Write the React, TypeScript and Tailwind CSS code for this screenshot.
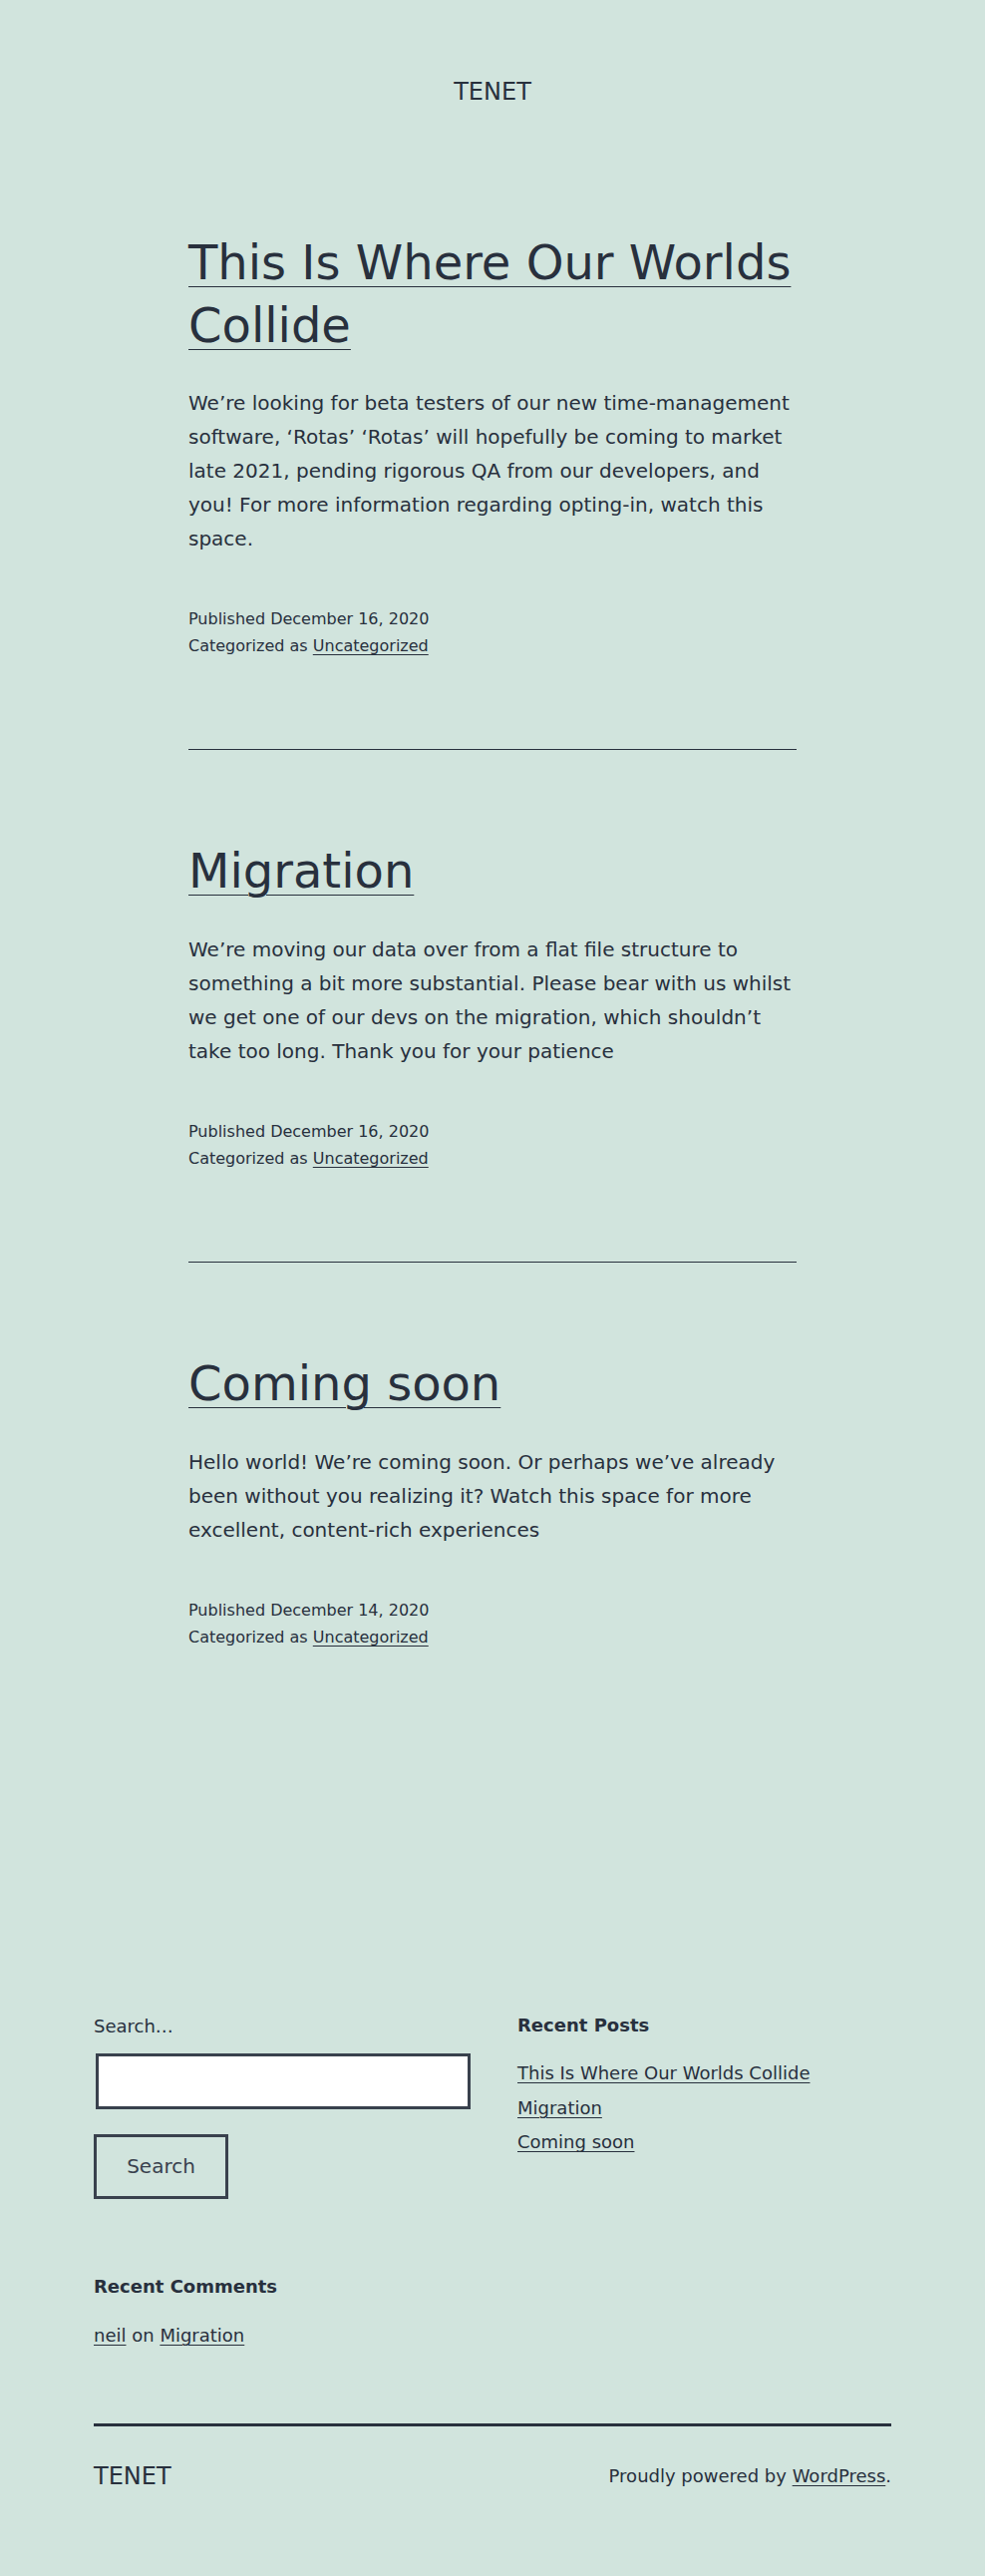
import React from "react";

type Post = {
  title: string;
  body: string;
  date: string;
};

const posts: Post[] = [
  {
    title: "This Is Where Our Worlds Collide",
    body: "We\u2019re looking for beta testers of our new time-management software, \u2018Rotas\u2019 \u2018Rotas\u2019 will hopefully be coming to market late 2021, pending rigorous QA from our developers, and you! For more information regarding opting-in, watch this space.",
    date: "December 16, 2020",
  },
  {
    title: "Migration",
    body: "We\u2019re moving our data over from a flat file structure to something a bit more substantial. Please bear with us whilst we get one of our devs on the migration, which shouldn\u2019t take too long. Thank you for your patience",
    date: "December 16, 2020",
  },
  {
    title: "Coming soon",
    body: "Hello world! We\u2019re coming soon. Or perhaps we\u2019ve already been without you realizing it? Watch this space for more excellent, content-rich experiences",
    date: "December 14, 2020",
  },
];

function Article({ post }: { post: Post }) {
  return (
    <article>
      <h2 className="text-[48px] leading-[62.4px] font-normal">
        <a href="#" className="underline decoration-1 underline-offset-[0.15em]">
          {post.title}
        </a>
      </h2>
      <p className="mt-[30px] text-[20px] leading-[34px]">{post.body}</p>
      <div className="mt-[50px] text-[16px] leading-[27.2px]">
        <div>Published {post.date}</div>
        <div>
          Categorized as{" "}
          <a href="#" className="underline decoration-1 underline-offset-[3px]">
            Uncategorized
          </a>
        </div>
      </div>
    </article>
  );
}

export default function App() {
  return (
    <div className="min-h-[2583px] bg-[#d1e4dd] text-[#28303d] font-['DejaVu_Sans',sans-serif]">
      <header className="pt-[77px] text-center text-[24px] leading-[31.2px]">TENET</header>

      <main className="mx-auto mt-[124px] w-[610px]">
        {posts.map((p, i) => (
          <div key={p.title}>
            <Article post={p} />
            {i < posts.length - 1 && (
              <hr className="mt-[90px] mb-[90px] border-t border-[#28303d]" />
            )}
          </div>
        ))}
      </main>

      <footer className="mx-auto mt-[362px] w-[800px] pb-[84px]">
        <div className="grid grid-cols-[376px_376px] gap-x-[49px]">
          <div>
            <label className="block text-[18px] leading-[30.6px]">Search…</label>
            <input
              type="text"
              className="mt-[11px] ml-[2px] block h-[56px] w-[376px] border-[3px] border-[#39414d] bg-white"
            />
            <button className="mt-[25px] block h-[65px] w-[135px] border-[3px] border-[#39414d] text-[20px] leading-[30px] text-[#39414d]">
              Search
            </button>
          </div>
          <div>
            <h2 className="mt-[2px] text-[18px] font-bold leading-[23.4px]">Recent Posts</h2>
            <ul className="mt-[20px] text-[18px] leading-[34.5px]">
              {posts.map((p) => (
                <li key={p.title}>
                  <a href="#" className="underline decoration-1 underline-offset-[3px]">
                    {p.title}
                  </a>
                </li>
              ))}
            </ul>
          </div>
        </div>

        <div className="mt-[76px]">
          <h2 className="text-[18px] font-bold leading-[23.4px]">Recent Comments</h2>
          <p className="mt-[23px] text-[18px] leading-[30.6px]">
            <a href="#" className="underline decoration-1 underline-offset-[3px]">neil</a> on{" "}
            <a href="#" className="underline decoration-1 underline-offset-[3px]">Migration</a>
          </p>
        </div>

        <div className="mt-[72px] h-[3px] bg-[#28303d]" />

        <div className="mt-[35px] flex items-start justify-between">
          <div className="text-[24px] leading-[31.2px]">TENET</div>
          <div className="text-[18px] leading-[30.6px]">
            Proudly powered by{" "}
            <a href="#" className="underline decoration-1 underline-offset-[3px]">WordPress</a>.
          </div>
        </div>
      </footer>
    </div>
  );
}
